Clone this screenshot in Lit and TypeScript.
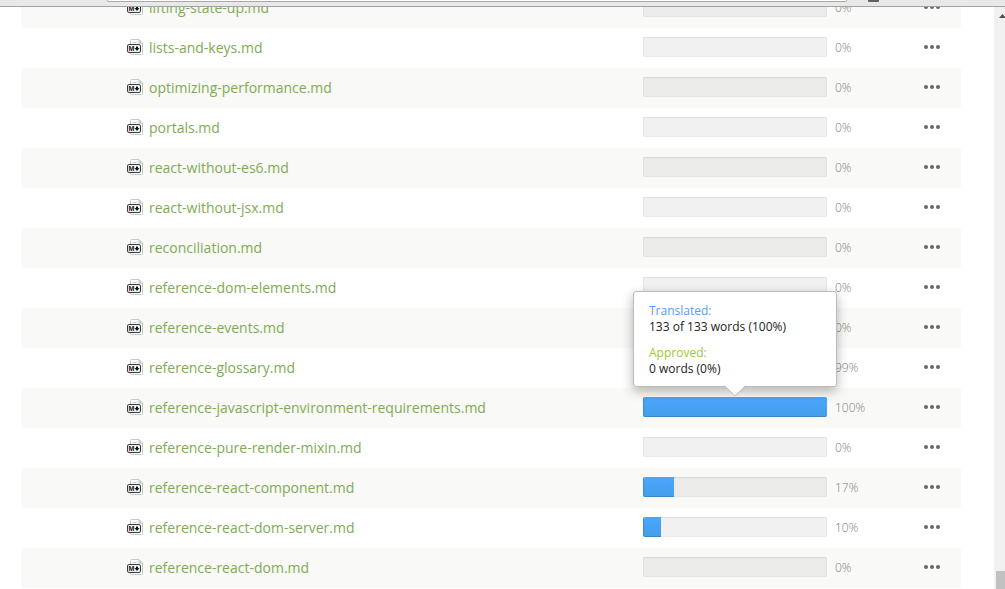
import { LitElement, html, css, svg } from "lit";
import { customElement, property } from "lit/decorators.js";

interface FileEntry {
  name: string;
  percent: number;
  tip?: { translated: string; approved: string };
}

const FILES: FileEntry[] = [
  { name: "lifting-state-up.md", percent: 0 },
  { name: "lists-and-keys.md", percent: 0 },
  { name: "optimizing-performance.md", percent: 0 },
  { name: "portals.md", percent: 0 },
  { name: "react-without-es6.md", percent: 0 },
  { name: "react-without-jsx.md", percent: 0 },
  { name: "reconciliation.md", percent: 0 },
  { name: "reference-dom-elements.md", percent: 0 },
  { name: "reference-events.md", percent: 0 },
  { name: "reference-glossary.md", percent: 99 },
  {
    name: "reference-javascript-environment-requirements.md",
    percent: 100,
    tip: { translated: "133 of 133 words (100%)", approved: "0 words (0%)" },
  },
  { name: "reference-pure-render-mixin.md", percent: 0 },
  { name: "reference-react-component.md", percent: 17 },
  { name: "reference-react-dom-server.md", percent: 10 },
  { name: "reference-react-dom.md", percent: 0 },
];

const markdownIcon = svg`
  <path d="M3.5 5V1.5Q3.5 .5 4.5 .5H12L15.5 4V14.500Q15.500 15.500 14.500 15.500H4.500Q3.500 15.500 3.500 14.500V13" fill="#fff" stroke="#c0cac0"/>
  <path d="M11.500 .5V4.500H15.500Z" fill="#c0cac0"/>
  <path d="M5.500 3.500H10" stroke="#d3dad3"/>
  <rect x=".5" y="5.500" width="13" height="8" rx="1.500" fill="#f4f4f4" stroke="#3a3a3e"/>
  <text x="1.5" y="12" class="mark">M</text>
  <path d="M9 7.500H11V9H12.500L10 12L7.500 9H9Z" fill="#111"/>`;

@customElement("file-row")
export class FileRow extends LitElement {
  @property({ attribute: false }) file!: FileEntry;
  @property({ type: Boolean, reflect: true }) shaded = false;

  static styles = css`
    :host {
      display: grid;
      grid-template-columns: 16px minmax(0, 1fr) 184px 93px 24px;
      align-items: center;
      height: 40px;
      box-sizing: border-box;
      padding: 0 17px 0 106px;
    }
    :host([shaded]) {
      background: #f9f9f7;
    }
    .icon {
      display: block;
      width: 16px;
      height: 16px;
      margin-bottom: 2px;
    }
    .mark {
      font: 700 7px "Liberation Sans", sans-serif;
      fill: #111;
    }
    .name {
      padding-left: 6px;
      color: #80ab54;
      font-size: 14px;
      line-height: 20px;
      text-decoration: none;
      white-space: nowrap;
    }
    .progress {
      position: relative;
      height: 20px;
      margin-bottom: 2px;
    }
    .track {
      height: 20px;
      border-radius: 2px;
      overflow: hidden;
      background: rgba(0, 0, 0, 0.055);
      box-shadow: inset 0 0 0 1px rgba(0, 0, 0, 0.03),
        inset 0 1px 1px rgba(0, 0, 0, 0.05);
    }
    .fill {
      height: 20px;
      background: linear-gradient(#4ba6ff, #459ee8);
      box-shadow: inset 1px -1px 0 rgba(0, 0, 0, 0.15);
    }
    .percent {
      padding-left: 8px;
      color: #808080;
      font-size: 12px;
      font-weight: 300;
      line-height: 20px;
    }
    .more {
      display: grid;
      place-items: center;
      height: 20px;
      margin-bottom: 2px;
      padding: 0;
      border: 0;
      background: none;
      cursor: pointer;
    }
    .tip {
      position: absolute;
      left: 50%;
      bottom: 30px;
      z-index: 2;
      width: 204px;
      transform: translateX(-50%);
      box-sizing: border-box;
      padding: 11px 15px 9px;
      border: 1px solid #bbb;
      border-radius: 3px;
      background: #fff;
      box-shadow: 0 4px 12px rgba(0, 0, 0, 0.3);
      color: #222;
      font-size: 12px;
      line-height: 16px;
    }
    .tip dl,
    .tip dd {
      margin: 0;
    }
    .tip dl {
      display: grid;
      gap: 10px;
    }
    .translated {
      color: #4b9ffc;
    }
    .approved {
      color: #98cb2c;
    }
    .arrow {
      position: absolute;
      top: 100%;
      left: 50%;
      display: block;
      margin: -1px 0 0 -11px;
    }
  `;

  render() {
    const { name, percent, tip } = this.file;
    return html`
      <svg class="icon" viewBox="0 0 16 16" fill="none" aria-hidden="true">${markdownIcon}</svg>
      <a class="name" href="#${name}">${name}</a>
      <div class="progress">
        <div class="track" role="progressbar" aria-label=${name} aria-valuenow=${percent}>
          <div class="fill" style="width:${percent}%"></div>
        </div>
        ${tip
          ? html`<div class="tip" role="tooltip">
              <dl>
                <div>
                  <dt class="translated">Translated:</dt>
                  <dd>${tip.translated}</dd>
                </div>
                <div>
                  <dt class="approved">Approved:</dt>
                  <dd>${tip.approved}</dd>
                </div>
              </dl>
              <svg class="arrow" width="22" height="12" viewBox="0 0 22 12" aria-hidden="true">
                <path d="M0 0H22L11 11Z" fill="#fff" />
                <path d="M0 .5L11 11L22 .5" fill="none" stroke="#bbb" />
              </svg>
            </div>`
          : ""}
      </div>
      <span class="percent">${percent}%</span>
      <button class="more" type="button" aria-label="More actions for ${name}">
        <svg width="16" height="4" viewBox="0 0 16 4" fill="#666">
          <circle cx="2" cy="2" r="2" />
          <circle cx="8" cy="2" r="2" />
          <circle cx="14" cy="2" r="2" />
        </svg>
      </button>
    `;
  }
}

@customElement("app-root")
export class AppRoot extends LitElement {
  static styles = css`
    :host {
      display: flex;
      flex-direction: column;
      height: 100vh;
      overflow: hidden;
      background: #fff;
      font-family: "Open Sans", "Noto Sans", sans-serif;
    }
    .toolbar {
      display: flex;
      flex: none;
      gap: 21px;
      box-sizing: border-box;
      height: 7px;
      padding: 0 126px 0 107px;
      border-bottom: 1px solid #a0a39e;
      background: #e8e8e8;
    }
    .address {
      flex: 1;
      height: 1px;
      border: 1px solid #aaa;
      border-top: 0;
      border-radius: 0 0 3px 3px;
      background: #fff;
    }
    .extension {
      width: 11px;
      height: 2px;
      border-radius: 0 0 1px 1px;
      background: #606060;
    }
    .view {
      display: flex;
      flex: 1;
      min-height: 0;
      overflow: hidden;
    }
    .files {
      flex: 1;
      min-width: 0;
      margin: -19px 33px 0 21px;
      padding: 0;
      list-style: none;
    }
    .scrollbar {
      display: flex;
      flex: none;
      flex-direction: column;
      align-items: flex-end;
      justify-content: space-between;
      width: 11px;
      overflow: hidden;
      background: #f0f0f0;
    }
    .up {
      flex: none;
      margin: 7px -1px 0 0;
    }
    .thumb {
      width: 9px;
      height: 18px;
      background: #c1c1c1;
    }
  `;

  render() {
    return html`
      <div class="toolbar">
        <div class="address"></div>
        <div class="extension"></div>
      </div>
      <div class="view">
        <ul class="files">
          ${FILES.map(
            (file, i) => html`<li><file-row .file=${file} ?shaded=${i % 2 === 0}></file-row></li>`
          )}
        </ul>
        <div class="scrollbar" aria-hidden="true">
          <svg class="up" width="7" height="4" viewBox="0 0 7 4">
            <path d="M0 4L3.500 0L7 4Z" fill="#505050" />
          </svg>
          <div class="thumb"></div>
        </div>
      </div>
    `;
  }
}
